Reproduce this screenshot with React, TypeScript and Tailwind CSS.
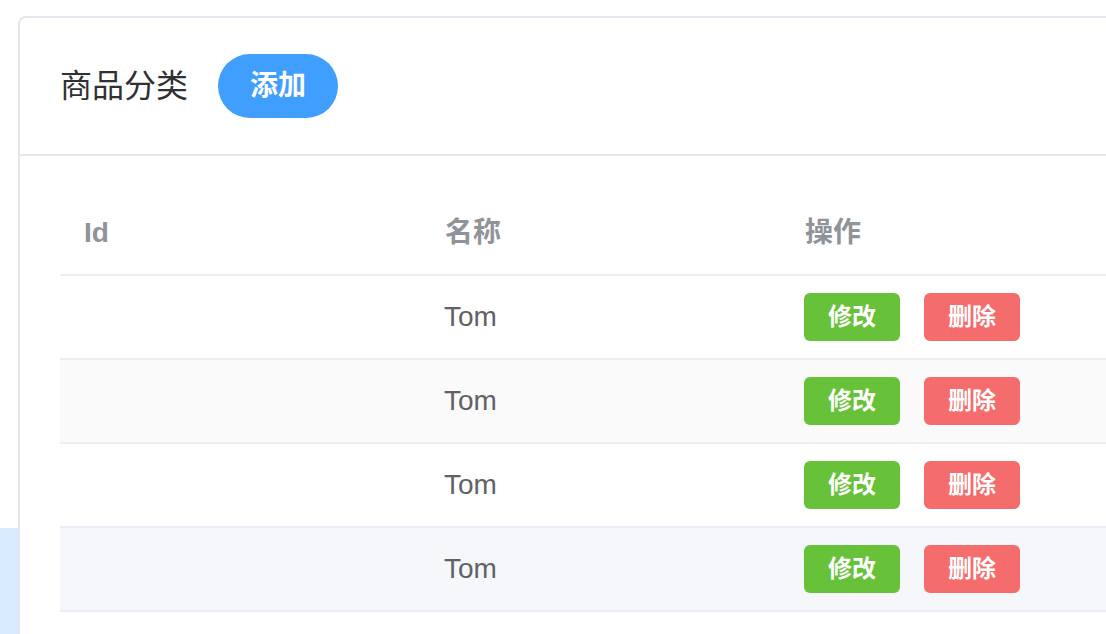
import React from "react";

const rows = [
  { name: "Tom", bg: "bg-white" },
  { name: "Tom", bg: "bg-[#fafafa]" },
  { name: "Tom", bg: "bg-white" },
  { name: "Tom", bg: "bg-[#f5f7fa]" },
];

export default function App() {
  return (
    <div
      className="w-[1106px] h-[634px] overflow-hidden bg-white flex"
      style={{ fontFamily: '"Liberation Sans", "Noto Sans CJK SC", sans-serif' }}
    >
      <div className="w-[18px] shrink-0 flex flex-col">
        <div className="h-[528px] shrink-0 bg-white" />
        <div className="flex-1 bg-[#d9ecff]" />
      </div>
      <div className="mt-[16px] w-[1200px] shrink-0 h-[700px] border-2 border-[#e4e7ed] rounded-tl-[8px] bg-white">
        <div className="h-[138px] border-b-2 border-[#e4e7ed] flex items-center pl-[40px]">
          <span className="text-[32px] leading-none text-[#303133]">商品分类</span>
          <button className="ml-[30px] w-[120px] h-[64px] rounded-full bg-[#409eff] text-white text-[28px] font-bold leading-none">
            添加
          </button>
        </div>
        <div className="pl-[40px] pt-[36px]">
          <div className="h-[84px] border-b-2 border-[#ebeef5] flex items-center text-[28px] font-bold text-[#909399]">
            <div className="w-[361px] pl-[24px]">Id</div>
            <div className="w-[360px] pl-[24px]">名称</div>
            <div className="pl-[24px]">操作</div>
          </div>
          {rows.map((r, i) => (
            <div
              key={i}
              className={`h-[84px] border-b-2 border-[#ebeef5] flex items-center ${r.bg}`}
            >
              <div className="w-[361px] pl-[24px]" />
              <div className="w-[360px] pl-[23px] text-[28px] text-[#606266]">{r.name}</div>
              <div className="pl-[23px] flex gap-[24px]">
                <button className="w-[96px] h-[48px] rounded-[6px] bg-[#67c23a] text-white text-[24px] font-bold leading-none">
                  修改
                </button>
                <button className="w-[96px] h-[48px] rounded-[6px] bg-[#f56c6c] text-white text-[24px] font-bold leading-none">
                  删除
                </button>
              </div>
            </div>
          ))}
        </div>
      </div>
    </div>
  );
}
